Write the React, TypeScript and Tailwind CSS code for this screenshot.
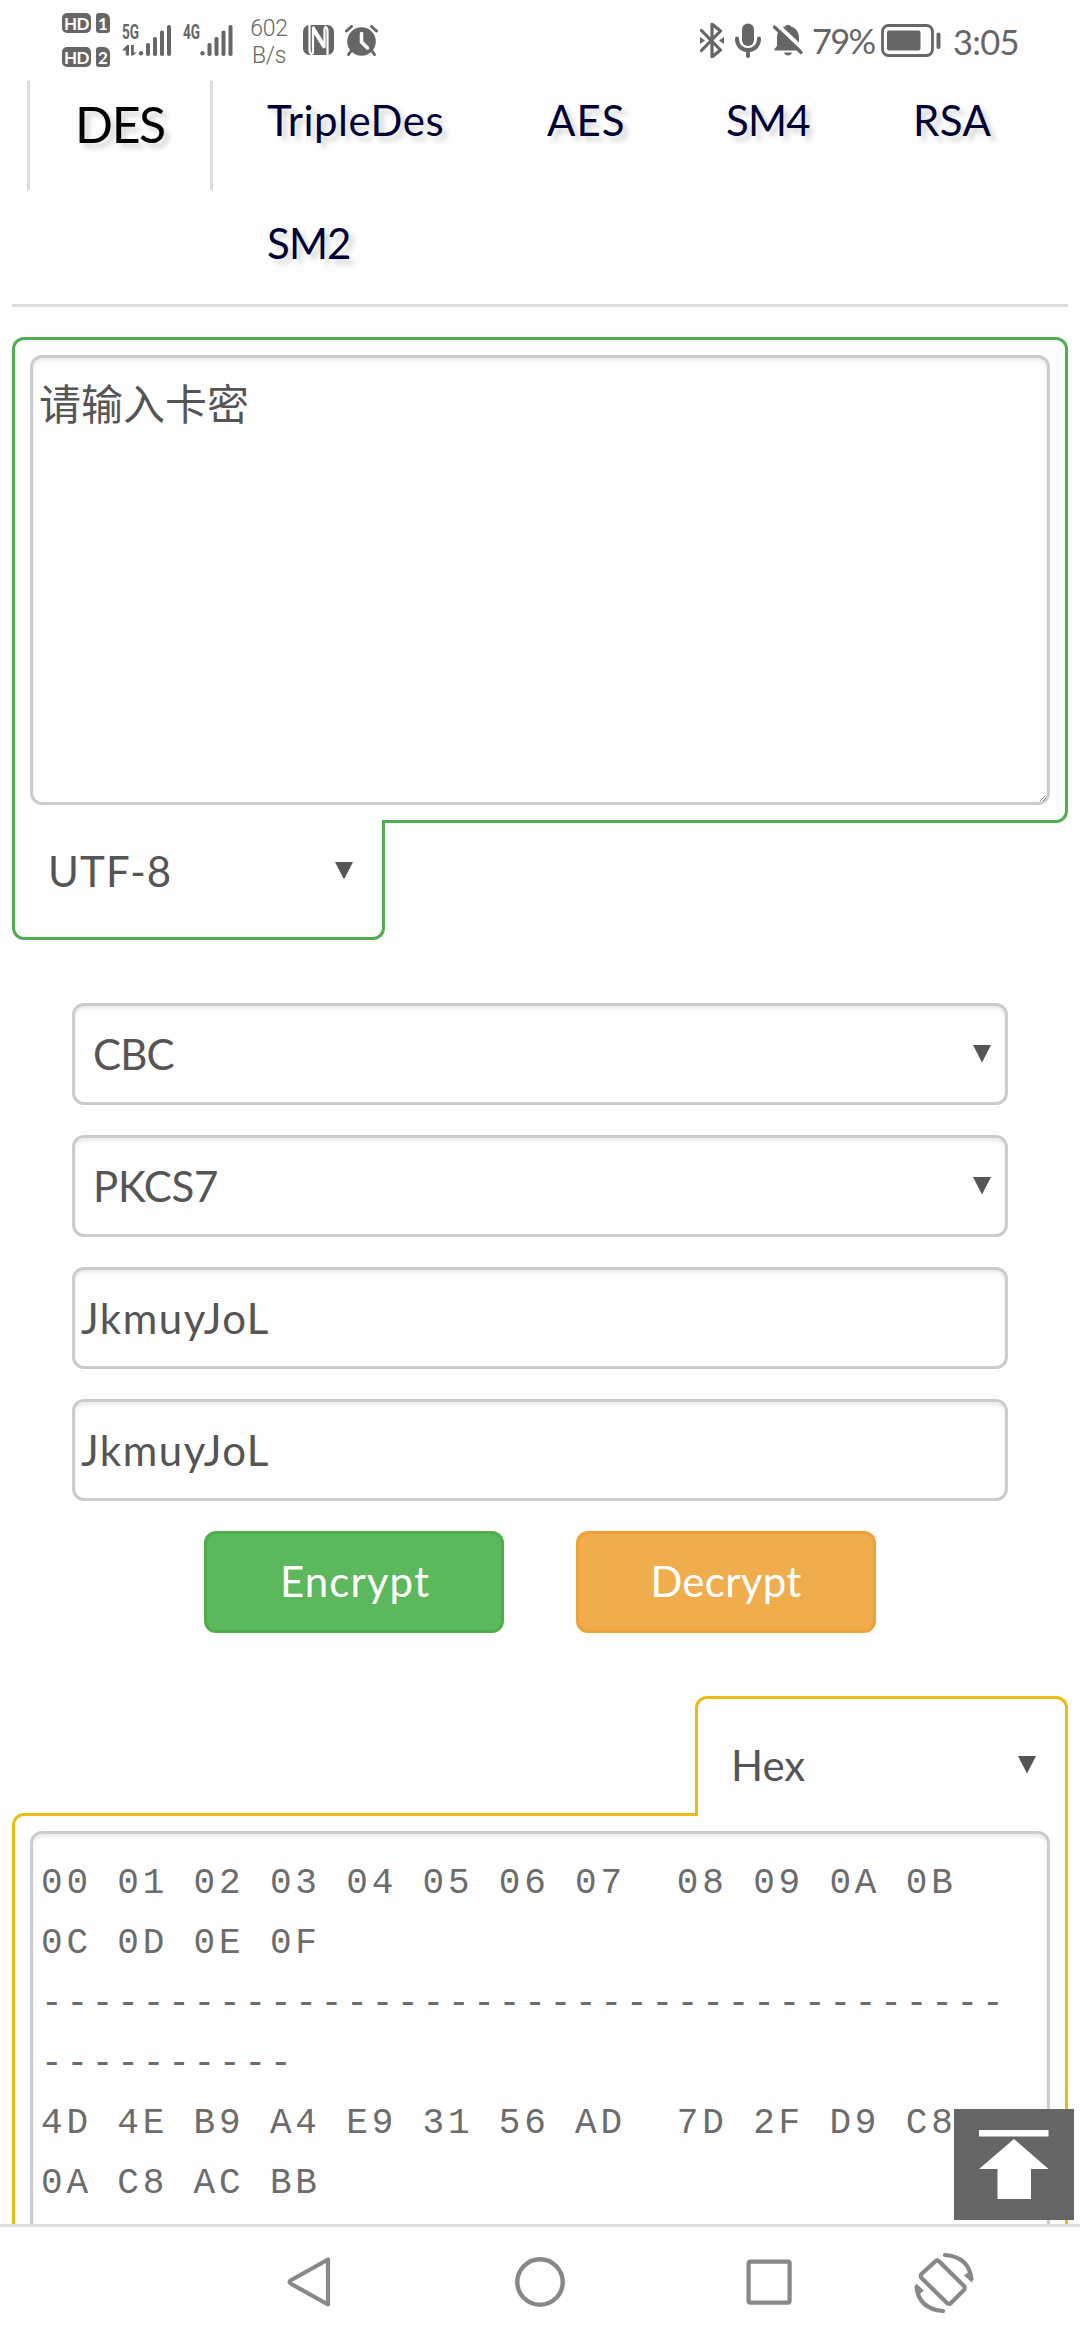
import React from "react";

const GREY = "#666";

function Badges() {
  const row = (n: string) => (
    <div className="flex h-5 gap-[5px]">
      <span className="flex h-5 w-[29px] items-center justify-center rounded-[5px] bg-[#666] text-[17px] font-bold leading-none tracking-[-0.5px] text-white">
        HD
      </span>
      <span className="flex h-5 w-[14px] items-center justify-center rounded-[3px] rounded-tr-[6px] bg-[#666] text-[17px] font-bold leading-none text-white">
        {n}
      </span>
    </div>
  );
  return (
    <div className="mt-[13px] flex flex-col gap-[14px]">
      {row("1")}
      {row("2")}
    </div>
  );
}

function Signal({ label, arrows, className }: { label: string; arrows?: boolean; className: string }) {
  return (
    <div className={className}>
      <span className="absolute left-0 top-0 origin-left scale-x-[0.680] text-[20px] font-bold leading-[14px] font-['Roboto',sans-serif]">
        {label}
      </span>
      <svg width="50" height="31" viewBox="0 0 50 31" fill={GREY}>
        {arrows && (
          <path d="M0 25.500 5 20h2v10.500H3.800v-5zM9 20h2.800v7.500H15L11 30.500H9z" />
        )}
        <circle cx={arrows ? 19 : 19.500} cy="28.300" r="2.200" />
        <rect x={arrows ? 24 : 24.500} y="18" width="4" height="13" rx="1.800" />
        <rect x={arrows ? 31 : 31.500} y="12" width="4" height="19" rx="1.800" />
        <rect x={arrows ? 38 : 38.500} y="5.500" width="4" height="25.500" rx="1.800" />
        <rect x={arrows ? 45 : 45.500} y="0" width="4" height="31" rx="1.800" />
      </svg>
    </div>
  );
}

function StatusBar() {
  return (
    <div className="flex h-[81px] shrink-0 items-start pl-[62px] text-[#666]">
      <Badges />
      <Signal label="5G" arrows className="relative ml-3 mt-[25px] w-[50px]" />
      <Signal label="4G" className="relative ml-[11px] mt-[25px] w-[50px]" />
      <div className="ml-[12px] mt-[15px] flex w-[48px] flex-col text-center font-['Roboto',sans-serif] text-[23px] font-light leading-[27px] tracking-[-0.300px]">
        <span>602</span>
        <span>B/s</span>
      </div>
      {/* NFC */}
      <svg className="ml-[10px] mt-[25px]" width="31" height="31" viewBox="0 0 31 31">
        <rect width="31" height="30" rx="6.500" fill={GREY} />
        <path
          d="M6.500 -1v26q0 3.500 3 4.500M24.500 31V6q0-3.500-3-4.500M10 29V5.500L21 23M10 1.500 21.500 20V3"
          fill="none"
          stroke="#fefefe"
          strokeWidth="2.200"
        />
      </svg>
      {/* Alarm */}
      <svg className="ml-[11px] mt-[25px]" width="33" height="31" viewBox="0 0 33 31">
        <circle cx="16.500" cy="16.500" r="14.300" fill={GREY} />
        <path d="M1.500 6 6.500 1.500M31.500 6 26.500 1.500M6 26 3.500 29.500M27 26l2.500 3.500" stroke={GREY} strokeWidth="3" strokeLinecap="round" />
        <path d="M16.500 8.500V17l6 6" fill="none" stroke="#fefefe" strokeWidth="3.500" strokeLinecap="round" />
      </svg>
      {/* Bluetooth */}
      <svg className="ml-[322px] mt-[23px]" width="24" height="35" viewBox="0 0 24 35">
        <path d="M1.500 7.500 20.500 27 12 34V1l8.500 7L1.500 27.500" fill="none" stroke={GREY} strokeWidth="3.200" strokeLinejoin="round" strokeLinecap="round" />
        <path d="M0 14 5 17.500 0 21zM24 14l-5 3.500 5 3.500z" fill={GREY} />
      </svg>
      {/* Microphone */}
      <svg className="ml-[11px] mt-[23px]" width="26" height="35" viewBox="0 0 26 35">
        <rect x="7" y="0.500" width="12" height="22.500" rx="6" fill={GREY} />
        <path d="M2 15.500C2 31 24 31 24 15.500M13 27v6" fill="none" stroke={GREY} strokeWidth="4" strokeLinecap="round" />
      </svg>
      {/* Muted bell */}
      <svg className="ml-[12px] mt-[24px]" width="30" height="32" viewBox="0 0 30 32">
        <path
          d="M12 2.500a3.500 3.500 0 0 1 6 0c5 1.500 8 5.500 8 11v9l2.500 4H1.500V25l2.500-3V13.500C4 8.500 7 4 12 2.500z"
          fill={GREY}
        />
        <path d="M11 28.500h8c-1 4-7 4-8 0z" fill={GREY} />
        <path d="M3.500 0 32 27" stroke="#fefefe" strokeWidth="4" />
        <path d="M1.500 3 28 28.500" stroke={GREY} strokeWidth="3.200" strokeLinecap="round" />
      </svg>
      <span className="ml-[9px] mt-[20px] w-[69px] whitespace-nowrap font-['Lato',sans-serif] text-[34.5px] leading-[42px] tracking-[-1.700px]">
        79%
      </span>
      <svg className="mt-[24px]" width="60" height="33" viewBox="0 0 60 33">
        <rect x="1.500" y="1.500" width="50" height="30" rx="6" fill="none" stroke={GREY} strokeWidth="2.800" />
        <rect x="6" y="6.500" width="33.500" height="20" rx="2" fill={GREY} />
        <rect x="55.500" y="8.500" width="4" height="16.500" rx="2" fill={GREY} />
      </svg>
      <span className="ml-[12px] mt-[21px] whitespace-nowrap font-['Lato',sans-serif] text-[34.5px] leading-[42px] tracking-[-0.700px]">
        3:05
      </span>
    </div>
  );
}

function Tabs() {
  const tabs: [string, string][] = [
    ["TripleDes", "tracking-[0.500px]"],
    ["AES", "tracking-[1px]"],
    ["SM4", "tracking-[-0.800px]"],
    ["RSA", "tracking-[0.500px]"],
    ["SM2", "tracking-[-0.900px]"],
  ];
  return (
    <nav className="mx-3 flex h-[226px] shrink-0 items-start border-b-3 border-[#ddd] pl-[15px]">
      <a className="h-[111px] w-[186px] border-3 border-t-0 border-x-[#ddd] border-b-transparent pl-[45px] pt-[13px] text-[50px] leading-[60px] tracking-[-1.400px] text-black [text-shadow:5px_5px_5px_rgba(0,0,0,0.16)]">
        DES
      </a>
      <div className="ml-[54px] grid grid-cols-[280px_179px_187px_120px] pt-[14px] text-[#000033]">
        {tabs.map(([t, k]) => (
          <a key={t} className={"h-[123px] text-[42px] leading-[50px] [text-shadow:5px_5px_5px_rgba(0,0,0,0.16)] " + k}>
            {t}
          </a>
        ))}
      </div>
    </nav>
  );
}

function Caret() {
  return (
    <svg width="18" height="18" viewBox="0 0 18 18" fill="#555">
      <path d="M0 0h18L9 17.500z" />
    </svg>
  );
}

const FIELD =
  "flex h-[102px] w-[936px] items-center justify-between rounded-xl border-3 border-[#ccc] bg-[#fefefe] shadow-[inset_0_3px_3px_rgba(0,0,0,0.075)]";

function NavBar() {
  return (
    <footer className="relative z-20 flex h-[116px] shrink-0 items-start border-t-3 border-[#dcdde0] bg-[#fefefe] pl-[286px]">
      <svg className="mt-[29px]" width="46" height="52" viewBox="0 0 46 52" fill="none" stroke="#888" strokeWidth="4.200" strokeLinejoin="round">
        <path d="M42 3.500v45L4.500 27.500q-1.500-1.500 0-3z" />
      </svg>
      <svg className="ml-[183px] mt-[29px]" width="50" height="52" viewBox="0 0 50 52" fill="none" stroke="#888" strokeWidth="4.400">
        <circle cx="25" cy="26" r="22.700" />
      </svg>
      <svg className="ml-[181px] mt-[31px]" width="46" height="48" viewBox="0 0 46 48" fill="none" stroke="#888" strokeWidth="4.200">
        <rect x="2.600" y="3.600" width="41" height="41" rx="1.500" />
      </svg>
      <svg className="ml-[121px] mt-[25px]" width="62" height="62" viewBox="0 0 62 62" fill="none" stroke="#888" strokeWidth="4.200" strokeLinejoin="round" strokeLinecap="round">
        <path d="M22.500 9.300 8.500 22q-1.300 2 0 4L34 51q2 1.500 4 0L51 38q1.300-2 0-4L26 9.300q-1.700-1.500-3.500 0z" />
        <path d="M32 3Q56 5 58.500 27M30 59Q6 57 3.500 35" />
        <path d="M59.500 31 51 23.500l5-4zM2.500 31l8.500 7.500-5 4z" fill="#888" stroke="none" />
      </svg>
    </footer>
  );
}

export default function App() {
  return (
    <div className="flex h-[2340px] w-[1080px] flex-col overflow-hidden bg-[#fefefe] font-['Lato','Noto_Sans_CJK_SC',sans-serif] text-[42px] leading-[60px] text-[#555]">
      <StatusBar />
      <Tabs />

      <main className="relative flex h-[1917px] shrink-0 flex-col overflow-hidden">
        {/* Source panel with its encoding selector hanging below */}
        <section className="mx-3 mt-[30px] h-[486px] shrink-0 rounded-xl rounded-bl-none border-3 border-[#4fad52] px-[15px] pt-[15px]">
          <div className="relative h-[450px] rounded-xl border-3 border-[#ccc] bg-[#fefefe] px-[6px] pt-[14px] font-['Noto_Sans_CJK_SC',sans-serif] shadow-[inset_0_3px_3px_rgba(0,0,0,0.075)]">
            请输入卡密
            <svg className="absolute bottom-0 right-0" width="8" height="8" viewBox="0 0 8 8" stroke="#666" strokeWidth="0.800">
              <path d="M1 7 6 2M4 7l3-3" />
            </svg>
          </div>
        </section>
        <div className="relative z-10 -mt-[3px] ml-3 flex h-[120px] w-[373px] shrink-0 items-center justify-between rounded-b-xl border-3 border-t-0 border-[#4fad52] bg-[#fefefe] pb-[15px] pl-[33px] pr-[29px] tracking-[1.100px]">
          UTF-8
          <Caret />
        </div>

        {/* Cipher settings */}
        <form className="mt-[63px] flex flex-col items-center gap-[30px]">
          <div className={FIELD + " pl-[18px] pr-[14px] tracking-[-0.800px]"}>
            CBC
            <Caret />
          </div>
          <div className={FIELD + " pl-[18px] pr-[14px] tracking-[-0.300px]"}>
            PKCS7
            <Caret />
          </div>
          <div className={FIELD + " pl-[6px] tracking-[1.500px]"}>JkmuyJoL</div>
          <div className={FIELD + " pl-[6px] tracking-[1.500px]"}>JkmuyJoL</div>
          <div className="flex gap-[72px] text-white">
            <button type="button" className="h-[102px] w-[300px] rounded-xl border-3 border-[#4cae4c] bg-[#5cb85c] pb-[2px] pl-[2px] tracking-[1.100px]">
              Encrypt
            </button>
            <button type="button" className="h-[102px] w-[300px] rounded-xl border-3 border-[#eea236] bg-[#f0ad4e] pb-[2px] tracking-[0.300px]">
              Decrypt
            </button>
          </div>
        </form>

        {/* Result panel with its format selector on top */}
        <div className="relative z-10 mr-3 mt-[63px] flex h-[120px] w-[373px] shrink-0 items-center justify-between self-end rounded-t-xl border-3 border-b-0 border-[#e9bc13] bg-[#fefefe] pl-[33px] pr-[29px] pt-[15px]">
          Hex
          <Caret />
        </div>
        <section className="mx-3 -mt-[3px] h-[600px] shrink-0 rounded-xl rounded-tr-none border-3 border-[#e9bc13] px-[15px] pt-[15px]">
          <pre className="h-[500px] rounded-xl border-3 border-[#ccc] bg-[#fefefe] pl-[8px] pt-[20px] font-['Liberation_Mono',monospace] text-[36px] leading-[60px] tracking-[3.830px] text-[#6c6c6c] shadow-[inset_0_3px_3px_rgba(0,0,0,0.075)]">
            {"00 01 02 03 04 05 06 07  08 09 0A 0B\n0C 0D 0E 0F\n" +
              "-".repeat(38) +
              "\n" +
              "-".repeat(10) +
              "\n4D 4E B9 A4 E9 31 56 AD  7D 2F D9 C8\n0A C8 AC BB"}
          </pre>
        </section>

        <button type="button" aria-label="Back to top" className="absolute bottom-[4px] right-[6px] z-20 flex h-[111px] w-[120px] items-start justify-center bg-[#666] pt-[21px]">
          <svg width="70" height="69" viewBox="0 0 70 69" fill="#fff">
            <path d="M0 0h69.500v6.500H0zM35 9 69.500 39H52v30H18.500V39H0z" />
          </svg>
        </button>
      </main>

      <NavBar />
    </div>
  );
}
